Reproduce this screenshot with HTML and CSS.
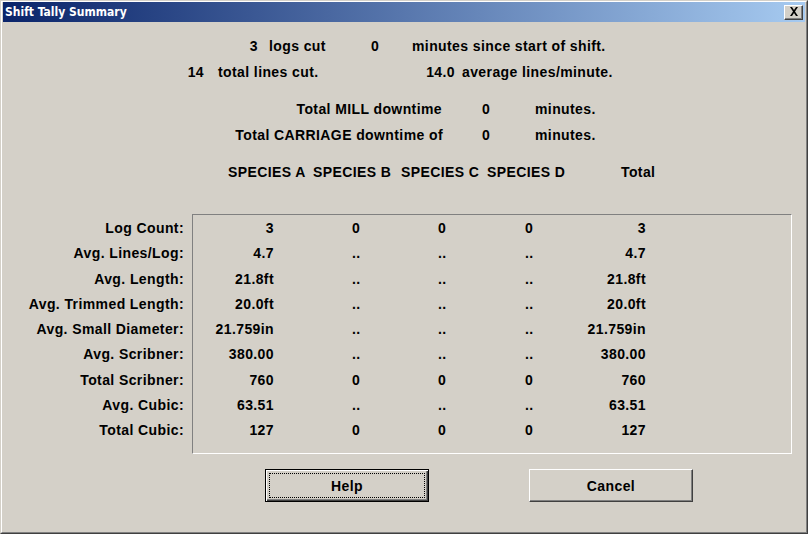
FILE: index.html
```html
<!DOCTYPE html>
<html>
<head>
<meta charset="utf-8">
<link rel="stylesheet" href="styles.css">
</head>
<body>
<div class="window">
  <div class="inner">
    <div class="titlebar">
      <span class="title">Shift Tally Summary</span>
      <span class="close">
        <svg width="10" height="9" viewBox="0 0 10 9"><path d="M1 0h2l2 3 2-3h2L6 4.5 9 9H7L5 6 3 9H1l3-4.5z" fill="#000"/></svg>
      </span>
    </div>
    <div class="content">
      <div class="line l1">
        <span class="a">3</span><span class="b">logs cut</span><span class="c">0</span><span>minutes since start of shift.</span>
      </div>
      <div class="line l2">
        <span class="a">14</span><span class="b">total lines cut.</span><span class="c">14.0</span><span class="d">average lines/minute.</span>
      </div>
      <div class="line l3">
        <span class="a">Total MILL downtime</span><span class="b">0</span><span>minutes.</span>
      </div>
      <div class="line l4">
        <span class="a">Total CARRIAGE downtime of</span><span class="b">0</span><span>minutes.</span>
      </div>
      <div class="line l5">
        <span class="sa">SPECIES A</span><span class="sb">SPECIES B</span><span class="sc">SPECIES C</span><span class="sd">SPECIES D</span><span>Total</span>
      </div>

      <div class="tally">
        <div class="labels">
          <div class="row">Log Count:</div>
          <div class="row">Avg. Lines/Log:</div>
          <div class="row">Avg. Length:</div>
          <div class="row">Avg. Trimmed Length:</div>
          <div class="row">Avg. Small Diameter:</div>
          <div class="row">Avg. Scribner:</div>
          <div class="row">Total Scribner:</div>
          <div class="row">Avg. Cubic:</div>
          <div class="row">Total Cubic:</div>
        </div>
        <div class="frame">
          <div class="row"><span class="v1">3</span><span class="v2">0</span><span class="v3">0</span><span class="v4">0</span><span class="vt">3</span></div>
          <div class="row"><span class="v1">4.7</span><span class="v2">..</span><span class="v3">..</span><span class="v4">..</span><span class="vt">4.7</span></div>
          <div class="row"><span class="v1">21.8ft</span><span class="v2">..</span><span class="v3">..</span><span class="v4">..</span><span class="vt">21.8ft</span></div>
          <div class="row"><span class="v1">20.0ft</span><span class="v2">..</span><span class="v3">..</span><span class="v4">..</span><span class="vt">20.0ft</span></div>
          <div class="row"><span class="v1">21.759in</span><span class="v2">..</span><span class="v3">..</span><span class="v4">..</span><span class="vt">21.759in</span></div>
          <div class="row"><span class="v1">380.00</span><span class="v2">..</span><span class="v3">..</span><span class="v4">..</span><span class="vt">380.00</span></div>
          <div class="row"><span class="v1">760</span><span class="v2">0</span><span class="v3">0</span><span class="v4">0</span><span class="vt">760</span></div>
          <div class="row"><span class="v1">63.51</span><span class="v2">..</span><span class="v3">..</span><span class="v4">..</span><span class="vt">63.51</span></div>
          <div class="row"><span class="v1">127</span><span class="v2">0</span><span class="v3">0</span><span class="v4">0</span><span class="vt">127</span></div>
        </div>
      </div>

      <div class="buttons">
        <button class="btn default"><span class="focus">Help</span></button>
        <button class="btn cancel"><span class="lbl">Cancel</span></button>
      </div>
    </div>
  </div>
</div>
</body>
</html>
```
FILE: styles.css
```css
* { box-sizing: border-box; }
html, body { margin: 0; padding: 0; background: #d4d0c8; }
body { width: 808px; height: 534px; overflow: hidden; }

.window {
  width: 808px;
  height: 534px;
  border: 1px solid;
  border-color: #d4d0c8 #404040 #404040 #d4d0c8;
  background: #d4d0c8;
}
.inner {
  height: 100%;
  border: 1px solid;
  border-color: #ffffff #808080 #808080 #ffffff;
  padding: 0 1px 1px 1px;
}
.titlebar {
  height: 20px;
  background: linear-gradient(to right, #0a246a, #a6caf0);
  display: flex;
  align-items: center;
  justify-content: space-between;
  padding: 0 2px 0 2px;
}
.title {
  color: #fff;
  font-family: "DejaVu Sans Condensed", "DejaVu Sans", sans-serif;
  font-stretch: condensed;
  font-weight: bold;
  font-size: 12px;
}
.close {
  width: 19px;
  height: 15px;
  background: #d4d0c8;
  border: 1px solid;
  border-color: #ffffff #404040 #404040 #ffffff;
  box-shadow: inset -1px -1px 0 #808080;
  display: flex;
  align-items: center;
  justify-content: center;
  padding-bottom: 1px;
}
.close svg { display: block; }

.content {
  font-family: "Liberation Sans", Arial, sans-serif;
  font-weight: bold;
  font-size: 14px;
  letter-spacing: 0.4px;
  color: #000;
}
.line {
  display: flex;
  height: 20px;
  line-height: 20px;
  white-space: nowrap;
}
.l1 { margin-top: 14px; }
.l1 .a { width: 255px; text-align: right; }
.l1 .b { width: 113px; padding-left: 11px; }
.l1 .c { width: 41px; }

.l2 { margin-top: 6px; }
.l2 .a { width: 201px; text-align: right; }
.l2 .b { width: 196px; padding-left: 14px; }
.l2 .c { width: 55px; text-align: right; }
.l2 .d { padding-left: 7px; }

.l3 { margin-top: 17px; }
.l3 .a { width: 439px; text-align: right; }
.l3 .b { width: 93px; padding-left: 40px; }

.l4 { margin-top: 6px; }
.l4 .a { width: 440px; text-align: right; }
.l4 .b { width: 92px; padding-left: 39px; }

.l5 { margin-top: 17px; padding-left: 225px; }
.l5 .sa { width: 85px; }
.l5 .sb { width: 88px; }
.l5 .sc { width: 86px; }
.l5 .sd { width: 134px; }

.tally {
  display: flex;
  margin-top: 32px;
  gap: 8px;
}
.labels {
  width: 181px;
  padding-top: 2px;
  text-align: right;
}
.frame {
  width: 600px;
  height: 240px;
  border: 1px solid;
  border-color: #808080 #ffffff #ffffff #808080;
  padding-top: 1px;
}
.row {
  height: 25.25px;
  line-height: 25px;
  white-space: nowrap;
}
.frame .row { display: flex; }
.v1 { width: 81px; text-align: right; }
.v2 { width: 164px; padding-left: 78px; }
.v3 { width: 87px; }
.v4 { width: 60px; }
.vt { width: 61px; text-align: right; }

.buttons {
  display: flex;
  margin-top: 15px;
  padding-left: 262px;
  gap: 100px;
}
.btn {
  width: 164px;
  height: 33px;
  background: #d4d0c8;
  font: inherit;
  letter-spacing: inherit;
  color: #000;
  padding: 0;
  margin: 0;
  border: 1px solid;
  border-color: #ffffff #404040 #404040 #ffffff;
  box-shadow: inset -1px -1px 0 #808080;
  display: flex;
  align-items: center;
  justify-content: center;
}
.btn.default {
  border: 1px solid #000;
  box-shadow: inset 1px 1px 0 #ffffff, inset -1px -1px 0 #404040, inset -2px -2px 0 #808080;
  padding: 3px;
}
.focus {
  display: flex;
  align-items: center;
  justify-content: center;
  width: 100%;
  height: 100%;
  border: 1px dotted #000;
}
```
